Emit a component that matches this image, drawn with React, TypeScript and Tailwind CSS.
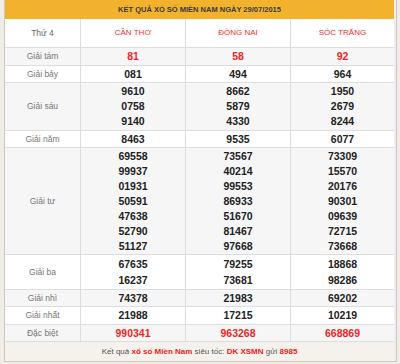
import React from "react";

type Prize = {
  label: string;
  h: string;
  lead: string;
  red?: boolean;
  values: string[][];
};

const provinces = ["CẦN THƠ", "ĐỒNG NAI", "SÓC TRĂNG"];

const prizes: Prize[] = [
  { label: "Giải tám", h: "h-[18px]", lead: "leading-[15px]", red: true, values: [["81"], ["58"], ["92"]] },
  { label: "Giải bảy", h: "h-[17px]", lead: "leading-[15px]", values: [["081"], ["494"], ["964"]] },
  {
    label: "Giải sáu",
    h: "h-[48px]",
    lead: "leading-[15px]",
    values: [
      ["9610", "0758", "9140"],
      ["8662", "5879", "4330"],
      ["1950", "2679", "8244"],
    ],
  },
  { label: "Giải năm", h: "h-[17px]", lead: "leading-[15px]", values: [["8463"], ["9535"], ["6077"]] },
  {
    label: "Giải tư",
    h: "h-[107px]",
    lead: "leading-[15px]",
    values: [
      ["69558", "99937", "01931", "50591", "47638", "52790", "51127"],
      ["73567", "40214", "99553", "86933", "51670", "81467", "97668"],
      ["73309", "15570", "20176", "90301", "09639", "72715", "73668"],
    ],
  },
  {
    label: "Giải ba",
    h: "h-[35px]",
    lead: "leading-[16px]",
    values: [
      ["67635", "16237"],
      ["79255", "73681"],
      ["18868", "98286"],
    ],
  },
  { label: "Giải nhì", h: "h-[17px]", lead: "leading-[15px]", values: [["74378"], ["21983"], ["69202"]] },
  { label: "Giải nhất", h: "h-[18px]", lead: "leading-[15px]", values: [["21988"], ["17215"], ["10219"]] },
  { label: "Đặc biệt", h: "h-[17px]", lead: "leading-[15px]", red: true, values: [["990341"], ["963268"], ["668869"]] },
];

const cols = "grid grid-cols-[76px_105px_105px_103px]";

export default function App() {
  return (
    <div className="w-[400px] h-[364px] bg-[#f1ece6] pl-[4px] pr-[3px] font-['Liberation_Sans',Arial,sans-serif]">
      <div className="border-x border-b border-[#cdc8c0] bg-[#eeeeee] pr-[2px]">
        <div className="h-[19px] bg-[#f2b22e] flex items-center justify-center text-[7.5px] font-bold text-[#3a3a3a] uppercase">
          Kết quả xổ số Miền Nam ngày 29/07/2015
        </div>

        <div className={`${cols} h-[29px] bg-white border-b border-[#dddddd]`}>
          <div className="flex items-center justify-center border-r border-[#dddddd] text-[8.5px] text-[#666]">
            Thứ 4
          </div>
          {provinces.map((p, i) => (
            <div
              key={p}
              className={`flex items-center justify-center text-[8px] text-[#f52b2b] ${i < 2 ? "border-r border-[#dddddd]" : ""}`}
            >
              {p}
            </div>
          ))}
        </div>

        {prizes.map((row, r) => (
          <div
            key={row.label}
            className={`${cols} ${row.h} border-b border-[#dddddd] ${r % 2 === 0 ? "bg-[#f6f6f6]" : "bg-white"}`}
          >
            <div className="flex items-center justify-center border-r border-[#dddddd] text-[8.5px] text-[#777]">
              {row.label}
            </div>
            {row.values.map((vals, i) => (
              <div
                key={i}
                className={`flex flex-col items-center justify-center font-bold text-[10.5px] ${row.lead} ${
                  row.red ? "text-[#f51f1f]" : "text-[#222]"
                } ${i < 2 ? "border-r border-[#dddddd]" : ""}`}
              >
                {vals.map((v, k) => (
                  <span key={k}>{v}</span>
                ))}
              </div>
            ))}
          </div>
        ))}

        <div className="h-[19px] bg-[#f5f2ee] flex items-center justify-center text-[8px] text-[#555]">
          <span>
            Kết quả <b className="text-[#f02020]">xổ số Miền Nam</b> siêu tốc:{" "}
            <b className="text-[#f02020]">DK XSMN</b> gửi <b className="text-[#f02020]">8985</b>
          </span>
        </div>
      </div>
    </div>
  );
}
